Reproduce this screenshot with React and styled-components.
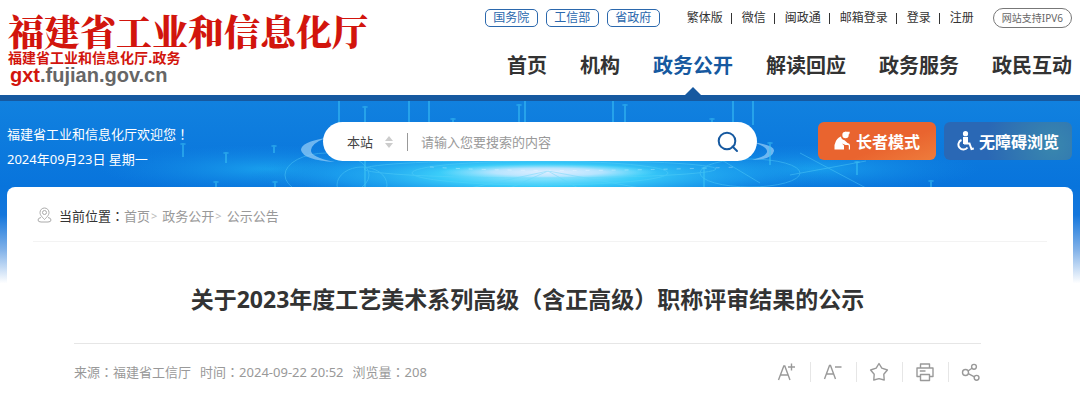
import React, { useState } from 'react';
import styled, { createGlobalStyle, css } from 'styled-components';

const GlobalStyle = createGlobalStyle`
  * {
    box-sizing: border-box;
  }
  body {
    margin: 0;
    background: #ffffff;
    color: #333333;
    font-family: "Noto Sans", "Noto Sans CJK SC", sans-serif;
    font-size: 13px;
  }
  a {
    color: inherit;
    text-decoration: none;
  }
  button, input, select {
    font-family: inherit;
  }
`;

const Header = styled.header`
  display: flex;
  justify-content: space-between;
  height: 101px;
  padding: 0 8px;
  background: #ffffff;
  border-bottom: 6px solid #1659a0;
`;
const Logo = styled.a`
  display: flex;
  flex-direction: column;
  padding-top: 12px;
  white-space: nowrap;
`;
const LogoName = styled.span`
  color: #d2150d;
  font-family: "Noto Serif CJK SC", "Noto Sans CJK SC", serif;
  font-size: 36px;
  font-weight: 900;
  line-height: 38px;
`;
const LogoSub = styled.span`
  color: #d2150d;
  font-family: "Noto Sans CJK SC", sans-serif;
  font-size: 14px;
  font-weight: 700;
  line-height: 14px;
`;
const LogoDomain = styled.span`
  padding-left: 2px;
  color: #666666;
  font-family: "Liberation Sans", sans-serif;
  font-size: 20px;
  font-weight: 700;
  line-height: 22px;
  em {
    color: #d2150d;
    font-style: normal;
  }
`;
const HeaderRight = styled.div`
  display: flex;
  flex-direction: column;
  justify-content: space-between;
  align-items: flex-end;
  padding-top: 9px;
`;
const TopBar = styled.div`
  display: flex;
  align-items: center;
  height: 18px;
  font-size: 12px;
  line-height: 16px;
  white-space: nowrap;
`;
const Tag = styled.a`
  width: 53px;
  margin-right: 8px;
  border: 1px solid #2b68ad;
  border-radius: 5px;
  color: #2b68ad;
  text-align: center;
`;
const TopLinks = styled.div`
  display: flex;
  align-items: center;
  margin: 0 19px;
  a {
    display: flex;
    align-items: center;
  }
  a + a {
    margin-left: 8px;
    &::before {
      content: "";
      width: 1px;
      height: 11px;
      margin-right: 10px;
      background: #333333;
    }
  }
`;
const Pill = styled.a`
  height: 20px;
  padding: 0 8px;
  border: 1px solid #777777;
  border-radius: 10px;
  color: #666666;
  font-size: 10px;
  line-height: 18px;
`;
const Nav = styled.nav`
  display: flex;
  gap: 33px;
`;
const NavItem = styled.a`
  position: relative;
  height: 45px;
  color: #333333;
  font-size: 20px;
  font-weight: 700;
  line-height: 32px;
  white-space: nowrap;
  ${({ $active }) => $active && css`
    color: #1659a0;
    &::after {
      content: "";
      position: absolute;
      bottom: 0;
      left: 50%;
      margin-left: -8px;
      border: 8px solid transparent;
      border-top: 0;
      border-bottom-color: #1659a0;
    }
  `}
`;

const Stage = styled.main`
  position: relative;
  padding: 0 7px;
`;
const Backdrop = styled.svg`
  position: absolute;
  top: 0;
  left: 0;
  z-index: -1;
  width: 100%;
  height: 190px;
`;
const Banner = styled.section`
  display: grid;
  grid-template-columns: 1fr minmax(200px, 434px) 1fr;
  align-items: start;
  padding: 21px 0 15px;
`;
const Welcome = styled.p`
  margin: 0;
  color: #ffffff;
  line-height: 25px;
`;
// full-width punctuation centred in its square
const Mark = styled.span`
  font-family: "Noto Sans CJK TC", "Noto Sans CJK SC", sans-serif;
  line-height: 1;
`;
const Search = styled.form`
  display: flex;
  align-items: center;
  height: 39px;
  padding: 0 18px 0 24px;
  background: #ffffff;
  border-radius: 20px;
`;
const Scope = styled.label`
  display: flex;
  align-items: center;
  padding-right: 14px;
  border-right: 1px solid #999999;
  select {
    width: 38px;
    padding: 0;
    border: 0;
    background: none;
    color: #444444;
    font-size: 13px;
    line-height: 18px;
    appearance: none;
  }
`;
const Keyword = styled.input`
  flex: 1;
  min-width: 0;
  padding: 0 13px;
  border: 0;
  outline: none;
  font-size: 13px;
  &::placeholder {
    color: #999999;
  }
`;
const IconButton = styled.button`
  display: flex;
  padding: 0;
  border: 0;
  background: none;
  color: ${({ $color }) => $color};
  cursor: pointer;
`;
const Modes = styled.div`
  display: flex;
  justify-content: flex-end;
  gap: 8px;
  padding-right: 1px;
`;
const ModeButton = styled.button`
  display: flex;
  align-items: center;
  justify-content: center;
  gap: 5px;
  min-width: 118px;
  height: 38px;
  padding: 0 13px;
  border: 0;
  border-radius: 6px;
  background: ${({ $background }) => $background};
  color: #ffffff;
  font-size: 16px;
  font-weight: 700;
  white-space: nowrap;
  cursor: pointer;
`;

const Card = styled.article`
  padding: 0 26px 27px;
  background: #ffffff;
  border-radius: 8px 8px 0 0;
`;
const Breadcrumb = styled.nav`
  display: flex;
  align-items: center;
  height: 55px;
  padding: 2px 4px 0;
  border-bottom: 1px solid #f3f3f3;
  color: #999999;
  white-space: nowrap;
  svg {
    margin-right: 7px;
  }
  strong {
    color: #333333;
    font-weight: 400;
  }
  i {
    margin: 0 5px 0 1px;
    color: #bbbbbb;
    font-size: 11px;
    font-style: normal;
  }
`;
const TitleArea = styled.div`
  padding: 0 66px 0 41px;
`;
const Title = styled.h1`
  margin: 0;
  padding: 41px 0 28px;
  color: #333333;
  font-size: 23px;
  font-weight: 700;
  line-height: 32px;
  text-align: center;
`;
const Meta = styled.div`
  display: flex;
  justify-content: space-between;
  align-items: center;
  padding-top: 18px;
  border-top: 1px solid #e6e6e6;
  color: #999999;
  line-height: 20px;
`;
const Facts = styled.div`
  display: flex;
  flex-wrap: wrap;
  gap: 9px;
`;
const Tools = styled.div`
  display: flex;
  align-items: center;
  button + button {
    margin-left: 13px;
    padding-left: 12px;
    border-left: 1px solid #e6e6e6;
  }
`;

const NAV = ['首页', '机构', '政务公开', '解读回应', '政务服务', '政民互动'];
const TAGS = ['国务院', '工信部', '省政府'];
const LINKS = ['繁体版', '微信', '闽政通', '邮箱登录', '登录', '注册'];
const FACTS = [
  ['来源', '福建省工信厅'],
  ['时间', '2024-09-22 20:52'],
  ['浏览量', '208'],
];

// [x, top, bottom, has a bright cap]
const BEAMS = [
  [338, 0, 24, false], [364, 5, 24, true], [408, 0, 28, false], [428, 0, 22, false],
  [452, 17, 24, true], [518, 3, 24, true], [524, 0, 22, false], [612, 0, 22, false],
  [624, 3, 24, true], [711, 17, 24, true], [732, 0, 24, false], [752, 0, 24, false],
  [182, 42, 56, true], [225, 51, 62, true], [273, 44, 52, true], [215, 80, 86, true],
  [274, 80, 86, true], [364, 60, 86, false], [703, 66, 86, true], [769, 41, 64, true],
  [856, 60, 74, true], [930, 79, 86, true],
];

const TechBackdrop = () => (
  <Backdrop viewBox="0 0 1080 190" preserveAspectRatio="none" aria-hidden="true">
    <defs>
      <linearGradient id="sky" x1="0" y1="0" x2="0" y2="1">
        <stop offset="0" stopColor="#1181df" />
        <stop offset=".45" stopColor="#0874dc" />
        <stop offset=".6" stopColor="#1476dc" />
        <stop offset=".78" stopColor="#7fb0e8" />
        <stop offset=".96" stopColor="#ffffff" />
      </linearGradient>
      <radialGradient id="glow">
        <stop offset="0" stopColor="#a5ecff" />
        <stop offset=".35" stopColor="#3accf9" />
        <stop offset=".7" stopColor="#20aaf3" stopOpacity=".6" />
        <stop offset="1" stopColor="#1181df" stopOpacity="0" />
      </radialGradient>
      <radialGradient id="core">
        <stop offset="0" stopColor="#e2eeff" />
        <stop offset=".5" stopColor="#c8e6ff" stopOpacity=".8" />
        <stop offset="1" stopColor="#7fe0ff" stopOpacity="0" />
      </radialGradient>
      <radialGradient id="pool">
        <stop offset="0" stopColor="#1fb2f5" stopOpacity=".7" />
        <stop offset="1" stopColor="#168ee8" stopOpacity="0" />
      </radialGradient>
    </defs>
    <rect width="1080" height="190" fill="url(#sky)" />
    <svg width="1080" height="87" viewBox="0 0 1080 87">
      <ellipse cx="270" cy="68" rx="170" ry="24" fill="url(#pool)" />
      <ellipse cx="810" cy="68" rx="170" ry="24" fill="url(#pool)" />
      <ellipse cx="540" cy="74" rx="290" ry="32" fill="url(#glow)" />
      <ellipse cx="548" cy="71" rx="110" ry="8" fill="url(#core)" />
      <g fill="none" stroke="#5cd5fb" opacity=".4">
        <ellipse cx="327" cy="74" rx="42" ry="22" />
        <ellipse cx="362" cy="84" rx="25" ry="18" />
        <ellipse cx="540" cy="68" rx="176" ry="9" />
        <ellipse cx="540" cy="72" rx="128" ry="12" />
        <ellipse cx="750" cy="72" rx="50" ry="14" />
        <path d="M470 87L548 70L510 87M548 70L578 87M548 70L640 87M720 58L760 82M800 52L866 87M866 60L790 74" />
      </g>
      <path d="M430 66Q540 73 740 66" fill="none" stroke="#ffffff" strokeDasharray="4 9" opacity=".3" />
      <g fill="#8fc9f5" opacity=".75">
        <path d="M326 37Q301 41 301 49Q303 59 335 61Q310 56 311 49Q312 42 326 37Z" />
        <path d="M752 41Q775 44 774 50Q772 59 752 59Q768 55 767 50Q766 45 752 41Z" />
      </g>
      {BEAMS.map(([x, top, bottom, capped]) => (
        <g key={`${x}-${top}`} fill="#3dc5f5" opacity=".5">
          <rect x={x} y={top} width="2" height={bottom - top} />
          {capped && <ellipse cx={x + 1} cy={top + 1} rx="3" ry="1" />}
        </g>
      ))}
    </svg>
  </Backdrop>
);

const SearchIcon = () => (
  <svg width="22" height="22" viewBox="0 0 22 22" fill="none" stroke="currentColor" strokeWidth="2">
    <circle cx="10" cy="10" r="8.3" />
    <path d="M15.5 15.5L20 20" strokeLinecap="round" />
  </svg>
);
const SortIcon = () => (
  <svg width="8" height="14" viewBox="0 0 8 14" fill="#cccccc">
    <path d="M4 1L8 6H0ZM4 13L0 8H8Z" />
  </svg>
);
const ElderIcon = () => (
  <svg width="17" height="20" viewBox="0 0 17 20" fill="#ffffff">
    <circle cx="11.5" cy="4" r="3.2" />
    <path d="M11 0.8L15.8 0.8L15.4 3L13.5 4Z" />
    <path d="M7 5.5Q2.5 7 1.2 12L0.5 14V18.5H10V14.6L8 12.4L11.5 14H13.8Q14.8 14 14.8 15V18.5H16V14.5Q16 12.4 13.5 12L10.5 9.2Q7.4 8.6 7 5.5Z" />
  </svg>
);
const WheelchairIcon = () => (
  <svg width="17" height="20" viewBox="0 0 17 20" fill="none" stroke="#ffffff" strokeWidth="2">
    <circle cx="8.5" cy="2.7" r="2.6" fill="#ffffff" stroke="none" />
    <path d="M6 6H11V13H6Z" fill="#ffffff" stroke="none" />
    <path d="M4.5 9A5 5 0 1 0 10.5 16.5" />
    <path d="M7 12.5H12.5L14.5 18L16.8 17.4" />
  </svg>
);
const PinIcon = () => (
  <svg width="15" height="16" viewBox="0 0 15 16" fill="none" stroke="#aaaaaa">
    <path d="M7.5 12.5C4 9 3 7.5 3 5.5A4.5 4.5 0 0 1 12 5.5C12 7.5 11 9 7.5 12.5Z" />
    <circle cx="7.5" cy="5.5" r="2" />
    <path d="M4 10.5Q1 11 1 13Q1 15 4 15H11Q14 15 14 13Q14 11 11 10.5" />
  </svg>
);

const TOOLS = [
  { label: '放大字号', icon: <path d="M1.5 18L6.8 4H7.8L13 18M3.5 13H11.5M14.5 1.5V8.5M11 5H18" /> },
  { label: '缩小字号', icon: <path d="M1.5 17L6.5 3.5H7.5L12.5 17M3.5 12H11M12 5H18.5" /> },
  { label: '收藏', icon: <path d="M10 1.5L12.8 6.2L18.4 8L14.8 12.2L15.2 18L10 16.6L4.8 18L5.2 12.2L1.6 8L7.2 6.2Z" strokeLinejoin="round" /> },
  { label: '打印', icon: <path d="M5.5 6V2H14.5V6M5.5 14.5H2V6H18V14.5H14.5M5.5 12.5H14.5V18.5H5.5ZM4.8 9H10.5" strokeLinejoin="round" /> },
  {
    label: '分享',
    icon: (
      <>
        <circle cx="4.5" cy="10.5" r="3" />
        <circle cx="13" cy="4.8" r="2.4" />
        <circle cx="15.6" cy="15.8" r="2.4" />
        <path d="M7 9L11 6.2M7.3 11.6L13.4 14.8" />
      </>
    ),
  },
];

const App = () => {
  const [keyword, setKeyword] = useState('');
  return (
    <>
      <GlobalStyle />
      <Header>
        <Logo href="#">
          <LogoName>福建省工业和信息化厅</LogoName>
          <LogoSub>福建省工业和信息化厅.政务</LogoSub>
          <LogoDomain><em>gxt</em>.fujian.gov.cn</LogoDomain>
        </Logo>
        <HeaderRight>
          <TopBar>
            {TAGS.map(tag => <Tag href="#" key={tag}>{tag}</Tag>)}
            <TopLinks>
              {LINKS.map(link => <a href="#" key={link}>{link}</a>)}
            </TopLinks>
            <Pill href="#">网站支持IPV6</Pill>
          </TopBar>
          <Nav>
            {NAV.map(item => (
              <NavItem href="#" key={item} $active={item === '政务公开'}>{item}</NavItem>
            ))}
          </Nav>
        </HeaderRight>
      </Header>
      <Stage>
        <TechBackdrop />
        <Banner>
          <Welcome>
            福建省工业和信息化厅欢迎您<Mark>！</Mark><br />
            2024年09月23日 星期一
          </Welcome>
          <Search onSubmit={e => e.preventDefault()}>
            <Scope>
              <select aria-label="搜索范围">
                <option>本站</option>
              </select>
              <SortIcon />
            </Scope>
            <Keyword
              type="text"
              aria-label="搜索内容"
              placeholder="请输入您要搜索的内容"
              value={keyword}
              onChange={e => setKeyword(e.target.value)}
            />
            <IconButton type="submit" aria-label="搜索" $color="#1659a0"><SearchIcon /></IconButton>
          </Search>
          <Modes>
            <ModeButton type="button" $background="linear-gradient(160deg, #e9642f 60%, #ee7c3c)">
              <ElderIcon />长者模式
            </ModeButton>
            <ModeButton type="button" $background="radial-gradient(circle at 85% 60%, #3987ae, #2a68b5 60%)">
              <WheelchairIcon />无障碍浏览
            </ModeButton>
          </Modes>
        </Banner>
        <Card>
          <Breadcrumb aria-label="当前位置">
            <PinIcon />
            <strong>当前位置<Mark>：</Mark></strong>
            <a href="#">首页</a><i>&gt;</i>
            <a href="#">政务公开</a><i>&gt;</i>
            <a href="#">公示公告</a>
          </Breadcrumb>
          <TitleArea>
            <Title>
              关于2023年度工艺美术系列高级<Mark>（</Mark>含正高级<Mark>）</Mark>职称评审结果的公示
            </Title>
            <Meta>
              <Facts>
                {FACTS.map(([name, value]) => (
                  <span key={name}>{name}<Mark>：</Mark>{value}</span>
                ))}
              </Facts>
              <Tools>
                {TOOLS.map(({ label, icon }) => (
                  <IconButton type="button" key={label} aria-label={label} $color="#999999">
                    <svg width="20" height="20" viewBox="0 0 20 20" fill="none" stroke="currentColor" strokeWidth="1.4">
                      {icon}
                    </svg>
                  </IconButton>
                ))}
              </Tools>
            </Meta>
          </TitleArea>
        </Card>
      </Stage>
    </>
  );
};

export default App;
